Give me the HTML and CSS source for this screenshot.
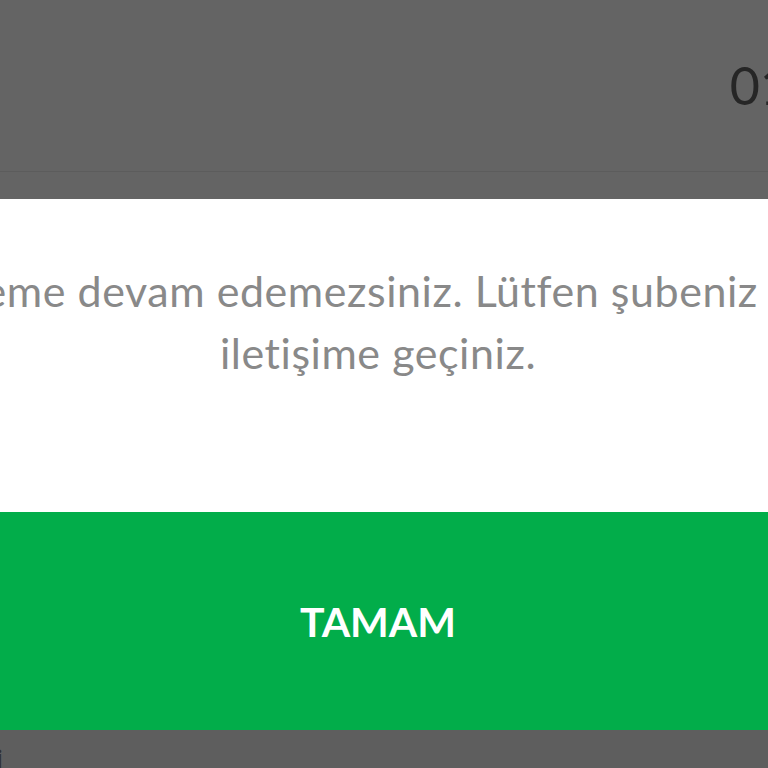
FILE: index.html
```html
<!DOCTYPE html>
<html lang="tr">
<head>
<meta charset="utf-8">
<link rel="stylesheet" href="styles.css">
</head>
<body>
<div class="screen">
  <div class="top">
    <div class="header">
      <span class="time">01</span>
    </div>
  </div>
  <div class="dialog">
    <p class="message">İşleme devam edemezsiniz. Lütfen şubeniz ile<br>iletişime geçiniz.</p>
  </div>
  <div class="ok">TAMAM</div>
  <div class="bottom"><span class="glyph">İ</span></div>
</div>
</body>
</html>
```
FILE: styles.css
```css
html, body {
  margin: 0;
  padding: 0;
  width: 768px;
  height: 768px;
  overflow: hidden;
  background: #5e5e5e;
}
.screen {
  display: flex;
  flex-direction: column;
  width: 768px;
  height: 768px;
  font-family: Lato, "Open Sans", sans-serif;
}
.top {
  height: 199px;
  background: #646464;
  display: flex;
  flex-direction: column;
}
.header {
  height: 171px;
  border-bottom: 1px solid #5c5c5c;
  display: flex;
  justify-content: flex-end;
  align-items: flex-start;
}
.time {
  margin-top: 53px;
  margin-right: -22px;
  font-size: 52px;
  line-height: 64px;
  color: #262626;
}
.dialog {
  height: 313px;
  background: #ffffff;
  display: flex;
  justify-content: center;
  overflow: hidden;
}
.message {
  flex: none;
  width: 1200px;
  margin: 61px 0 0 0;
  transform: translateX(-6px);
  text-align: center;
  font-size: 43px;
  line-height: 62px;
  letter-spacing: 0.55px;
  color: #898989;
  white-space: nowrap;
}
.ok {
  height: 218px;
  background: #02ad4a;
  color: #ffffff;
  font-weight: 700;
  font-size: 41px;
  display: flex;
  align-items: center;
  justify-content: center;
  padding-right: 12px;
  box-sizing: border-box;
}
.bottom {
  flex: 1;
  background: #5e5e5e;
  position: relative;
}
.glyph {
  position: absolute;
  left: -4px;
  top: 18px;
  font-size: 26px;
  color: #303030;
}
```
